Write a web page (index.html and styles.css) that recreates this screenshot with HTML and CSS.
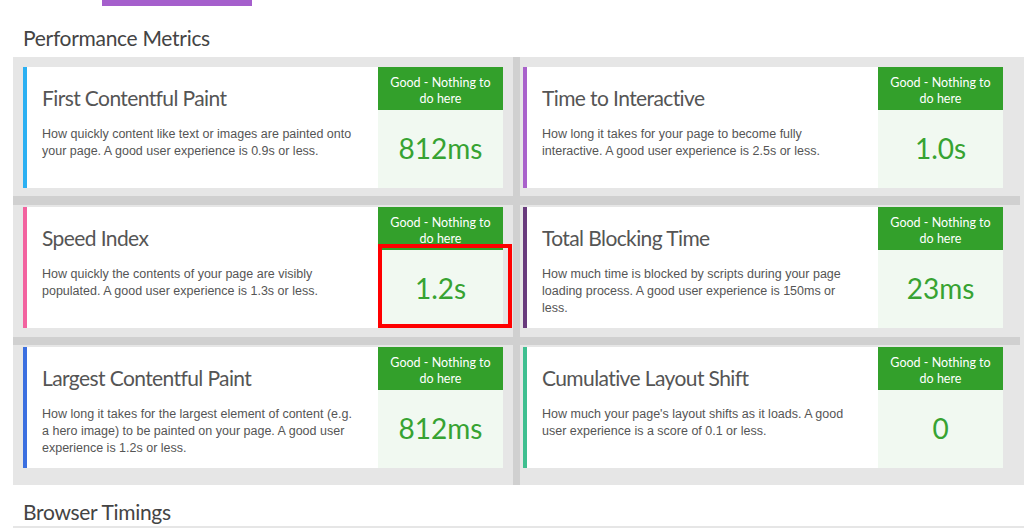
FILE: index.html
```html
<!DOCTYPE html>
<html lang="en">
<head>
  <meta charset="UTF-8" />
  <meta name="viewport" content="width=device-width, initial-scale=1.0"/>
  <title>Performance Report</title>
  <link rel="stylesheet" href="styles.css">
</head>
<body>

  <div class="topbar">
    <span class="tag">Time to Interactive: 1.0s</span>
  </div>

  <h2 class="section-title">Performance Metrics</h2>

  <div class="metrics">
    <div class="cell">
      <div class="card fcp">
        <div class="card-body">
          <h3>First Contentful Paint</h3>
          <p>How quickly content like text or images are painted onto your page. A good user experience is 0.9s or less.</p>
        </div>
        <div class="card-side">
          <div class="grade">Good - Nothing to do here</div>
          <div class="value">812ms</div>
        </div>
      </div>
    </div>

    <div class="cell">
      <div class="card tti">
        <div class="card-body">
          <h3>Time to Interactive</h3>
          <p>How long it takes for your page to become fully interactive. A good user experience is 2.5s or less.</p>
        </div>
        <div class="card-side">
          <div class="grade">Good - Nothing to do here</div>
          <div class="value">1.0s</div>
        </div>
      </div>
    </div>

    <div class="cell">
      <div class="card si">
        <div class="card-body">
          <h3>Speed Index</h3>
          <p>How quickly the contents of your page are visibly populated. A good user experience is 1.3s or less.</p>
        </div>
        <div class="card-side">
          <div class="grade">Good - Nothing to do here</div>
          <div class="value highlighted">1.2s</div>
        </div>
      </div>
    </div>

    <div class="cell">
      <div class="card tbt">
        <div class="card-body">
          <h3>Total Blocking Time</h3>
          <p>How much time is blocked by scripts during your page loading process. A good user experience is 150ms or less.</p>
        </div>
        <div class="card-side">
          <div class="grade">Good - Nothing to do here</div>
          <div class="value">23ms</div>
        </div>
      </div>
    </div>

    <div class="cell">
      <div class="card lcp">
        <div class="card-body">
          <h3>Largest Contentful Paint</h3>
          <p>How long it takes for the largest element of content (e.g. a hero image) to be painted on your page. A good user experience is 1.2s or less.</p>
        </div>
        <div class="card-side">
          <div class="grade">Good - Nothing to do here</div>
          <div class="value">812ms</div>
        </div>
      </div>
    </div>

    <div class="cell">
      <div class="card cls">
        <div class="card-body">
          <h3>Cumulative Layout Shift</h3>
          <p>How much your page's layout shifts as it loads. A good user experience is a score of 0.1 or less.</p>
        </div>
        <div class="card-side">
          <div class="grade">Good - Nothing to do here</div>
          <div class="value">0</div>
        </div>
      </div>
    </div>
  </div>

  <h2 class="section-title second">Browser Timings</h2>
  <div class="timings">
    <div></div><div></div><div></div>
  </div>

</body>
</html>
```

FILE: styles.css
```css
body {
  margin: 0;
  font-family: Lato, "Open Sans", sans-serif;
  color: #4a4a4a;
  background: #fff;
}
.topbar {
  height: 6px;
  padding-left: 102px;
  overflow: hidden;
}
.tag {
  display: inline-block;
  width: 150px;
  height: 20px;
  margin-top: -12px;
  background: #a55fcc;
  color: #fff;
  font-size: 12px;
  line-height: 16px;
  text-align: center;
  vertical-align: top;
}
.section-title {
  margin: 19px 0 0 23px;
  height: 32px;
  font-size: 21px;
  font-weight: 400;
  line-height: 26px;
  letter-spacing: -0.3px;
  color: #444;
}
.section-title.second {
  margin-top: 14px;
  height: 27px;
}

.metrics {
  display: grid;
  grid-template-columns: 507px 500px;
  margin-left: 13px;
  background: #e6e6e6;
}
.cell:nth-child(odd) {
  padding-left: 10px;
  padding-right: 10px;
  border-right: 7px solid #d0d0d0;
}
.cell:nth-child(even) {
  padding-left: 3px;
  padding-right: 17px;
}
.cell:nth-child(-n+2) {
  padding-top: 10px;
  padding-bottom: 8px;
  border-bottom: 9px solid #d0d0d0;
}
.cell:nth-child(3), .cell:nth-child(4) {
  padding-top: 2px;
  padding-bottom: 9px;
  border-bottom: 8px solid #d0d0d0;
}
.cell:nth-child(n+5) {
  padding-top: 2px;
  padding-bottom: 17px;
}

.card {
  display: flex;
  height: 121px;
  background: #fff;
  border-left: 4px solid #ccc;
}
.card.fcp { border-left-color: #2bb0f2; }
.card.tti { border-left-color: #a962cb; }
.card.si  { border-left-color: #f2639f; }
.card.tbt { border-left-color: #693b7d; }
.card.lcp { border-left-color: #3b6fe0; }
.card.cls { border-left-color: #3fbf90; }

.card-body {
  flex: 1;
  padding: 18px 20px 0 15px;
}
.card-body h3 {
  margin: 0 0 15px;
  font-size: 21px;
  font-weight: 400;
  line-height: 26px;
  color: #555;
  letter-spacing: -0.6px;
}
.card-body p {
  margin: 0;
  font-family: "Liberation Sans", Arial, sans-serif;
  font-size: 12.5px;
  line-height: 17px;
  color: #555;
}
.card-side {
  display: flex;
  flex-direction: column;
  width: 125px;
}
.grade {
  box-sizing: border-box;
  height: 43px;
  padding: 8px 6px 0;
  background: #33a02b;
  color: #fff;
  font-size: 12.5px;
  line-height: 16px;
  text-align: center;
}
.value {
  position: relative;
  flex: 1;
  display: flex;
  align-items: center;
  justify-content: center;
  padding-bottom: 3px;
  background: #f1f9f1;
  color: #37a332;
  font-size: 28px;
}
.value.highlighted::after {
  content: "";
  position: absolute;
  left: 0;
  top: -6px;
  right: -9px;
  bottom: 0;
  border: 4px solid #f00;
}

.timings {
  display: flex;
  margin-left: 13px;
  height: 10px;
  border-top: 2px solid #e6e6e6;
}
.timings div {
  flex: 1;
  border-left: 1px solid #d8d8d8;
}
.timings div:first-child {
  border-left: none;
}
```
